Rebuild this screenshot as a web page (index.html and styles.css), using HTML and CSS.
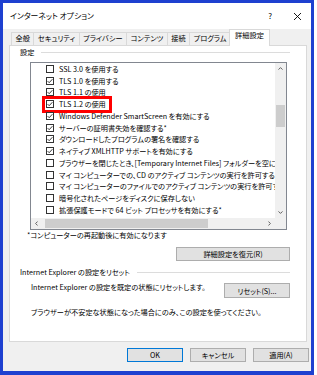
FILE: index.html
```html
<!DOCTYPE html>
<html lang="ja">
<head>
<meta charset="utf-8">
<title>インターネット オプション</title>
<link rel="stylesheet" href="styles.css">
</head>
<body>
<div class="window">
  <div class="titlebar">
    <span class="title">インターネット オプション</span>
    <span class="help">?</span>
    <span class="close"><svg width="9" height="9" viewBox="0 0 9 9"><path d="M1 1 L8 8 M8 1 L1 8" stroke="#000" stroke-width="0.9" fill="none"/></svg></span>
  </div>
  <div class="tabs">
    <div class="tab">全般</div>
    <div class="tab">セキュリティ</div>
    <div class="tab">プライバシー</div>
    <div class="tab">コンテンツ</div>
    <div class="tab">接続</div>
    <div class="tab">プログラム</div>
    <div class="tab active">詳細設定</div>
  </div>
  <div class="panel">
    <div class="group-head"><span>設定</span><span class="rule"></span></div>
    <div class="listbox">
      <div class="list">
        <div class="item"><span class="cb"></span><span>SSL 3.0 を使用する</span></div>
        <div class="item"><span class="cb"><svg width="6" height="6" viewBox="0 0 6 6"><path d="M0.6 3.1 L2.2 4.7 L5.4 1.2" stroke="#222" stroke-width="0.9" fill="none"/></svg></span><span>TLS 1.0 を使用する</span></div>
        <div class="item"><span class="cb"><svg width="6" height="6" viewBox="0 0 6 6"><path d="M0.6 3.1 L2.2 4.7 L5.4 1.2" stroke="#222" stroke-width="0.9" fill="none"/></svg></span><span>TLS 1.1 の使用</span></div>
        <div class="item"><span class="cb"><svg width="6" height="6" viewBox="0 0 6 6"><path d="M0.6 3.1 L2.2 4.7 L5.4 1.2" stroke="#222" stroke-width="0.9" fill="none"/></svg></span><span>TLS 1.2 の使用</span><span class="red"></span></div>
        <div class="item"><span class="cb"><svg width="6" height="6" viewBox="0 0 6 6"><path d="M0.6 3.1 L2.2 4.7 L5.4 1.2" stroke="#222" stroke-width="0.9" fill="none"/></svg></span><span>Windows Defender SmartScreen を有効にする</span></div>
        <div class="item"><span class="cb"><svg width="6" height="6" viewBox="0 0 6 6"><path d="M0.6 3.1 L2.2 4.7 L5.4 1.2" stroke="#222" stroke-width="0.9" fill="none"/></svg></span><span>サーバーの証明書失効を確認する*</span></div>
        <div class="item"><span class="cb"><svg width="6" height="6" viewBox="0 0 6 6"><path d="M0.6 3.1 L2.2 4.7 L5.4 1.2" stroke="#222" stroke-width="0.9" fill="none"/></svg></span><span>ダウンロードしたプログラムの署名を確認する</span></div>
        <div class="item"><span class="cb"><svg width="6" height="6" viewBox="0 0 6 6"><path d="M0.6 3.1 L2.2 4.7 L5.4 1.2" stroke="#222" stroke-width="0.9" fill="none"/></svg></span><span>ネイティブ XMLHTTP サポートを有効にする</span></div>
        <div class="item"><span class="cb"></span><span>ブラウザーを閉じたとき、[Temporary Internet Files] フォルダーを空にする</span></div>
        <div class="item"><span class="cb"></span><span>マイ コンピューターでの、CD のアクティブ コンテンツの実行を許可する*</span></div>
        <div class="item"><span class="cb"></span><span>マイ コンピューターのファイルでのアクティブ コンテンツの実行を許可する*</span></div>
        <div class="item"><span class="cb"></span><span>暗号化されたページをディスクに保存しない</span></div>
        <div class="item"><span class="cb"></span><span>拡張保護モードで 64 ビット プロセッサを有効にする*</span></div>
        <div class="item"><span class="cb"></span><span>拡張保護モードを有効にする*</span></div>
      </div>
      <div class="vscroll">
        <div class="arrow"><svg width="5" height="3" viewBox="0 0 5 3"><path d="M0.5 2.6 L2.5 0.6 L4.5 2.6" stroke="#606060" stroke-width="1" fill="none"/></svg></div>
        <div class="vthumb"></div>
        <div class="arrow down"><svg width="5" height="3" viewBox="0 0 5 3"><path d="M0.5 0.4 L2.5 2.4 L4.5 0.4" stroke="#606060" stroke-width="1" fill="none"/></svg></div>
      </div>
      <div class="hscroll">
        <div class="arrow"><svg width="3" height="5" viewBox="0 0 3 5"><path d="M2.6 0.5 L0.6 2.5 L2.6 4.5" stroke="#606060" stroke-width="1" fill="none"/></svg></div>
        <div class="hthumb"></div>
        <div class="arrow right"><svg width="3" height="5" viewBox="0 0 3 5"><path d="M0.4 0.5 L2.4 2.5 L0.4 4.5" stroke="#606060" stroke-width="1" fill="none"/></svg></div>
      </div>
      <div class="corner"></div>
    </div>
    <div class="note">*コンピューターの再起動後に有効になります</div>
    <div class="btn restore">詳細設定を復元(R)</div>
    <div class="group-head group2"><span>Internet Explorer の設定をリセット</span><span class="rule"></span></div>
    <div class="reset-row">
      <span class="reset-text">Internet Explorer の設定を既定の状態にリセットします。</span>
      <div class="btn reset">リセット(S)...</div>
    </div>
    <div class="caution">ブラウザーが不安定な状態になった場合にのみ、この設定を使ってください。</div>
  </div>
  <div class="footer">
    <div class="btn ok">OK</div>
    <div class="btn">キャンセル</div>
    <div class="btn">適用(A)</div>
  </div>
</div>
</body>
</html>
```

FILE: styles.css
```css
* { box-sizing: border-box; margin: 0; padding: 0; }

body {
  background: #fff;
  font-family: "Noto Sans CJK JP", "Noto Sans", sans-serif;
  font-size: 7.2px;
  color: #000;
  font-feature-settings: "palt";
}

.window {
  width: 314px;
  height: 375px;
  border: 3px solid #1e40d0;
  border-bottom-width: 4px;
  background: #f0f0f0;
  display: flex;
  flex-direction: column;
}

.titlebar {
  flex: none;
  height: 26px;
  background: #fff;
  display: flex;
  align-items: center;
  padding-left: 7px;
}

.title { font-size: 7.8px; line-height: 10px; }

.help {
  margin-left: auto;
  margin-right: 21px;
  font-size: 8px;
  line-height: 10px;
}

.close {
  width: 9px;
  height: 9px;
  margin-right: 9px;
  display: flex;
}

.tabs {
  flex: none;
  display: flex;
  align-items: flex-end;
  height: 17px;
  padding-left: 8px;
  margin-bottom: -1px;
  position: relative;
  z-index: 1;
}

.tab {
  height: 13px;
  margin-bottom: 1px;
  padding: 0 3.5px;
  line-height: 11px;
  border: 1px solid #d9d9d9;
  border-bottom: none;
  background: #f0f0f0;
  white-space: nowrap;
}

.tab + .tab { margin-left: -1px; }

.tab.active {
  height: 17px;
  margin-bottom: 0;
  margin-left: -2px;
  padding: 0 5px;
  line-height: 10px;
  background: #fff;
  position: relative;
  z-index: 2;
}

.panel {
  flex: none;
  margin-left: 6px;
  width: 298px;
  height: 297px;
  border: 1px solid #d9d9d9;
  background: #fff;
  display: flex;
  flex-direction: column;
}

.group-head {
  display: flex;
  align-items: center;
  height: 12px;
  padding-left: 10px;
  padding-right: 16px;
  white-space: nowrap;
}

.group-head .rule {
  flex: 1;
  height: 1px;
  background: #dcdcdc;
  margin-left: 7px;
}

.listbox {
  margin: 4px 19px 0 20px;
  height: 168px;
  border: 1px solid #828790;
  background: #fff;
  display: grid;
  grid-template-columns: minmax(0, 1fr) 11px;
  grid-template-rows: minmax(0, 1fr) 11px;
}

.list {
  min-width: 0;
  overflow: hidden;
  position: relative;
}

.item {
  height: 11.75px;
  display: flex;
  align-items: center;
  padding-left: 15px;
  white-space: nowrap;
  position: relative;
  line-height: 10px;
}

.cb {
  flex: none;
  width: 8px;
  height: 8px;
  border: 1px solid #333;
  background: #fff;
  margin-right: 5px;
  display: flex;
  align-items: center;
  justify-content: center;
}

.red {
  position: absolute;
  left: 10.5px;
  top: -2.5px;
  width: 70px;
  height: 17px;
  border: 3px solid #f00;
}

.vscroll {
  background: #f0f0f0;
  display: flex;
  flex-direction: column;
  align-items: center;
}

.vscroll .arrow {
  height: 11px;
  width: 11px;
  display: flex;
  align-items: center;
  justify-content: center;
}

.vscroll .down { margin-top: auto; }

.vthumb {
  margin-top: 31px;
  width: 9px;
  height: 22px;
  background: #cdcdcd;
}

.hscroll {
  background: #f0f0f0;
  display: flex;
  align-items: center;
}

.hscroll .arrow {
  width: 11px;
  height: 11px;
  display: flex;
  align-items: center;
  justify-content: center;
}

.hscroll .right { margin-left: auto; }

.hthumb {
  margin-left: 3px;
  width: 163px;
  height: 9px;
  background: #cdcdcd;
}

.corner { background: #f0f0f0; }

.note {
  padding-left: 17px;
  line-height: 10px;
  white-space: nowrap;
}

.btn {
  height: 14px;
  background: #e1e1e1;
  border: 1px solid #adadad;
  display: flex;
  align-items: center;
  justify-content: center;
  white-space: nowrap;
  line-height: 10px;
}

.restore {
  align-self: flex-end;
  margin-top: 7px;
  margin-right: 16px;
  width: 114px;
}

.group2 { margin-top: 5px; }

.reset-row {
  display: flex;
  align-items: flex-start;
  margin-top: 5px;
  padding-left: 21px;
  padding-right: 16px;
}

.reset-text {
  line-height: 9px;
  white-space: nowrap;
}

.reset {
  margin-left: auto;
  width: 66px;
  height: 15px;
}

.caution {
  padding-left: 21px;
  margin-top: 9px;
  line-height: 10px;
  white-space: nowrap;
}

.footer {
  flex: none;
  display: flex;
  justify-content: flex-end;
  gap: 7px;
  margin-top: 6px;
  padding-right: 2px;
}

.footer .btn { width: 56px; }

.footer .ok { border-color: #0078d7; }
```
